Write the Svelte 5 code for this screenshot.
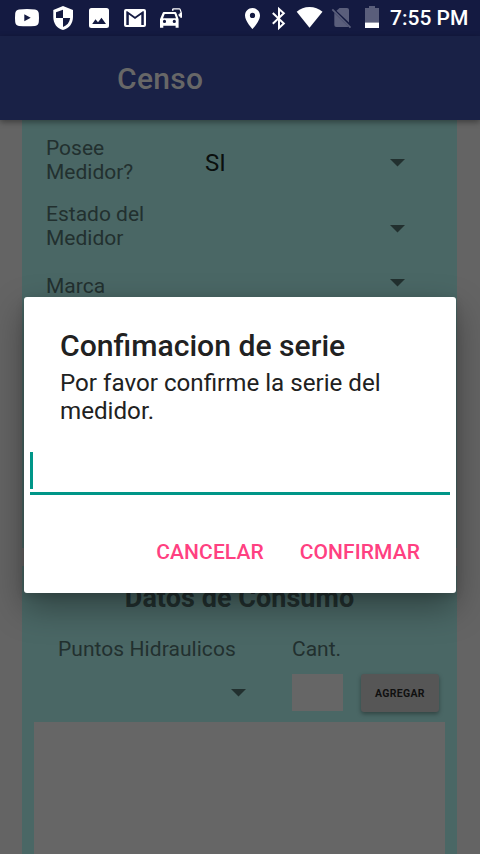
<script>
  const rows = [
    { label: 'Posee Medidor?', value: 'SI', tall: true },
    { label: 'Estado del Medidor', value: '', tall: true },
    { label: 'Marca', value: '', tall: false }
  ];
</script>

<div class="screen">
  <div class="status">
    <svg width="46" height="36" viewBox="0 0 46 36">
      <path fill-rule="evenodd" d="M19 9.4Q27 8.6 35 9.4Q38.5 9.8 38.8 13.5Q39.2 17.7 38.8 22Q38.5 25.6 35 26Q27 26.6 19 26Q15.500 25.600 15.200 22Q14.800 17.700 15.200 13.500Q15.500 9.800 19 9.400ZM24.300 14.200V21.200L30.700 17.700Z" />
    </svg>
    <svg width="36" height="36" viewBox="46 0 36 36">
      <path fill-rule="evenodd" d="M63 6L73 10V17C73 23.500 69 28.500 63 30C57 28.500 53.300 23.500 53.300 17V10ZM63 9.700L56 12.300V18H63V27C67 25.500 69.500 22.500 70.200 18H63Z" />
    </svg>
    <svg width="34" height="36" viewBox="82 0 34 36">
      <path fill-rule="evenodd" d="M91.500 8H106.500Q109 8 109 10.500V25.500Q109 28 106.500 28H91.500Q89 28 89 25.500V10.500Q89 8 91.500 8ZM92.200 24H106L101.500 17.800L98 22.300L95.500 19.300Z" />
    </svg>
    <svg width="38" height="36" viewBox="116 0 38 36">
      <path fill-rule="evenodd" d="M126 9H144Q146 9 146 11V25Q146 27 144 27H126Q124 27 124 25V11Q124 9 126 9ZM126.300 11.300V25H128.800V14.400L135 19L141.300 14.400V25H143.800V11.300H142.800L135 16.800L127.300 11.300Z" />
    </svg>
    <svg width="34" height="36" viewBox="154 0 34 36">
      <path fill-rule="evenodd" d="M163.800 12H175.200Q176 12 176.400 13L178.600 19.200V27.800H175.600V25.800H163.300V27.800H160V19.200L162.600 13Q163 12 163.800 12ZM164.700 14L163 18.300H176L174.500 14ZM164.500 19.800A1.600 1.600 0 1 0 164.500 23A1.600 1.600 0 1 0 164.500 19.800ZM174.300 19.800A1.600 1.600 0 1 0 174.300 23A1.600 1.600 0 1 0 174.300 19.800Z" />
      <path d="M172 10.800V9.600Q172.200 8.200 173.500 8.200H179.200Q180.400 8.200 180.700 9.300L182 13V17.700H180.200V16.500H179L178.300 14.300H179.600V12.800H180.700L179.500 9.500H173.500V10.800Z" />
    </svg>
    <svg class="right" width="28" height="36" viewBox="238 0 28 36">
      <path fill-rule="evenodd" d="M252.500 8C248.300 8 245 11.300 245 15.400C245 21 252.500 29 252.500 29S260 21 260 15.400C260 11.300 256.700 8 252.500 8ZM252.500 12.800A2.600 2.600 0 1 1 252.500 18A2.600 2.600 0 1 1 252.500 12.800Z" />
    </svg>
    <svg width="25" height="36" viewBox="266 0 25 36">
      <path class="line" d="M272.800 13L283.800 23.600L279 28V9L283.800 13.200L272.800 23.800" />
    </svg>
    <svg width="35" height="36" viewBox="291 0 35 36">
      <path d="M296.700 11.700Q302 7 309.500 7Q317 7 322.500 11.700L309.500 27.700Z" />
    </svg>
    <svg class="dim" width="33" height="36" viewBox="326 0 33 36">
      <path d="M339.500 8H347Q349 8 349 10V22.500L336.500 10.800Z" />
      <path d="M334.300 12.800L348.300 26.500Q348 27 347 27H336.300Q334.300 27 334.300 25Z" />
      <path class="slash" d="M332.300 9.300L350.500 27.700" />
    </svg>
    <svg width="31" height="36" viewBox="359 0 31 36">
      <path class="dim" d="M369 6H375V8H379V22.500H365V8H369Z" />
      <path d="M365 22.500H379V28H365Z" />
    </svg>
    <span class="time">7:55 PM</span>
  </div>

  <header><h1>Censo</h1></header>

  <main>
    <section class="card meter">
      {#each rows as row}
        <div class="row" class:tall={row.tall}>
          <span class="label">{row.label}</span>
          <span class="value">{row.value}</span>
          <i class="arrow"></i>
        </div>
      {/each}
    </section>

    <section class="card usage">
      <h2>Datos de Consumo</h2>
      <div class="heads">
        <span>Puntos Hidraulicos</span>
        <span>Cant.</span>
      </div>
      <div class="controls">
        <i class="arrow"></i>
        <div class="qty"></div>
        <button class="add">AGREGAR</button>
      </div>
      <div class="list"></div>
    </section>
  </main>

  <div class="dialog">
    <h3>Confimacion de serie</h3>
    <p>Por favor confirme la serie del medidor.</p>
    <div class="field"><i class="caret"></i></div>
    <div class="actions">
      <button>CANCELAR</button>
      <button>CONFIRMAR</button>
    </div>
  </div>
</div>

<style>
  :global(body) {
    margin: 0;
  }
  .screen {
    position: relative;
    display: flex;
    flex-direction: column;
    width: 480px;
    height: 854px;
    overflow: hidden;
    background: #646464;
    font-family: Roboto, sans-serif;
    color: #22302f;
  }
  h1, h2, h3, p {
    margin: 0;
  }
  button {
    border: 0;
    padding: 0;
    background: none;
    font-family: inherit;
    white-space: nowrap;
  }
  .status {
    display: flex;
    flex: none;
    height: 36px;
    background: #141a41;
    color: #fff;
  }
  .status svg {
    flex: none;
    fill: #fff;
  }
  .status .right {
    margin-left: 50px;
  }
  .line {
    fill: none;
    stroke: #fff;
    stroke-width: 2;
  }
  .status .line {
    fill: none;
  }
  .status .dim {
    fill: #5a5e7b;
  }
  .slash {
    stroke: #5a5e7b;
    stroke-width: 1.800;
  }
  .time {
    font-size: 21px;
    font-weight: 500;
    line-height: 37px;
    white-space: nowrap;
  }
  header {
    position: relative;
    z-index: 1;
    flex: none;
    height: 84px;
    padding-left: 117px;
    box-sizing: border-box;
    background: #192146;
    box-shadow: 0 2px 6px rgba(0, 0, 0, 0.400);
  }
  h1 {
    font-size: 30px;
    font-weight: 500;
    line-height: 86px;
    letter-spacing: 0.300px;
    color: #676767;
  }
  main {
    flex: 1;
    display: flex;
    flex-direction: column;
    gap: 18px;
    padding: 0 23px 0 22px;
    min-height: 0;
  }
  .card {
    background: #4a6765;
  }
  .meter {
    flex: none;
    height: 428px;
    padding: 16px 52px 0 24px;
    box-sizing: border-box;
  }
  .row {
    display: flex;
    height: 24px;
    margin-bottom: 18px;
  }
  .row.tall {
    height: 48px;
  }
  .row:nth-child(2) {
    margin-bottom: 24px;
  }
  .label {
    width: 120px;
    font-size: 21px;
    line-height: 24px;
  }
  .value {
    flex: 1;
    padding-left: 39px;
    font-size: 24px;
    line-height: 54px;
    color: #0a0f0e;
  }
  .arrow {
    width: 15px;
    height: 7.500px;
    background: #22302f;
    clip-path: polygon(0 0, 100% 0, 50% 100%);
  }
  .row .arrow {
    margin-top: 5px;
  }
  .row.tall .arrow {
    margin-top: 23px;
  }
  .usage {
    flex: 1;
    display: flex;
    flex-direction: column;
    padding: 16px 12px 0;
  }
  h2 {
    font-size: 27px;
    font-weight: 700;
    line-height: 32px;
    letter-spacing: 0.040px;
    text-align: center;
  }
  .heads {
    display: flex;
    padding: 23px 0 0 24px;
    font-size: 21px;
    line-height: 24px;
  }
  .heads span:first-child {
    width: 234px;
    letter-spacing: 0.060px;
  }
  .controls {
    display: flex;
    height: 48px;
    padding: 13px 5px 0 197px;
    box-sizing: border-box;
  }
  .controls .arrow {
    margin-top: 15px;
  }
  .qty {
    width: 51px;
    height: 37px;
    margin: 0 18px 0 46px;
    background: #666;
  }
  .add {
    width: 78px;
    height: 38px;
    border-radius: 3px;
    background: #565656;
    color: #101010;
    font-size: 10.500px;
    font-weight: 700;
    letter-spacing: 0.300px;
    box-shadow: 0 2px 4px rgba(0, 0, 0, 0.350);
  }
  .list {
    flex: 1;
    margin-top: 13px;
    background: #666;
  }
  .dialog {
    position: absolute;
    z-index: 2;
    left: 24px;
    top: 297px;
    width: 432px;
    height: 296px;
    padding: 31px 6px 0;
    box-sizing: border-box;
    border-radius: 3px;
    background: #fff;
    color: #212121;
    box-shadow: 0 14px 34px rgba(0, 0, 0, 0.360), 0 3px 8px rgba(0, 0, 0, 0.120);
  }
  h3 {
    padding-left: 30px;
    font-size: 30.150px;
    font-weight: 500;
    line-height: 36px;
  }
  p {
    padding: 5px 30px 0;
    font-size: 24.160px;
    line-height: 28px;
  }
  .field {
    height: 40px;
    margin-top: 27px;
    border-bottom: 3px solid #009688;
  }
  .caret {
    display: block;
    width: 3px;
    height: 37px;
    background: #009688;
  }
  .actions {
    display: flex;
    justify-content: flex-end;
    gap: 36px;
    padding: 44px 30px 0 0;
  }
  .actions button {
    font-size: 21px;
    font-weight: 500;
    line-height: 26px;
    letter-spacing: 0.080px;
    color: #ff4081;
  }
</style>
